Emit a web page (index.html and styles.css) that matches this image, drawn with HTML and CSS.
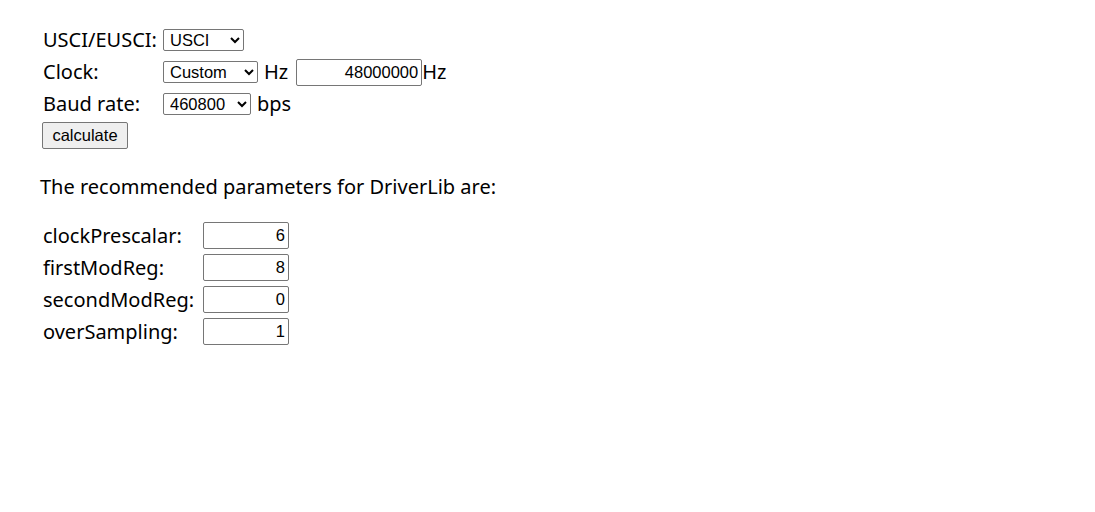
FILE: index.html
```html
<!DOCTYPE html>
<html>
<head>
<meta charset="utf-8">
<link rel="stylesheet" href="styles.css">
</head>
<body>
<div class="page">
  <div class="form">
    <div class="row">
      <span class="label">USCI/EUSCI:</span>
      <div class="field">
        <select class="sel sel-usci"><option>USCI</option><option>EUSCI</option></select>
      </div>
    </div>
    <div class="row">
      <span class="label">Clock:</span>
      <div class="field">
        <select class="sel sel-clock"><option>Custom</option></select>
        <span class="unit">Hz</span>
        <input class="num num-clock" type="text" value="48000000"><span class="unit tight">Hz</span>
      </div>
    </div>
    <div class="row">
      <span class="label">Baud rate:</span>
      <div class="field">
        <select class="sel sel-baud"><option>460800</option></select>
        <span class="unit">bps</span>
      </div>
    </div>
    <div class="btnrow">
      <button class="btn" type="button">calculate</button>
    </div>
  </div>
  <p class="intro">The recommended parameters for DriverLib are:</p>
  <div class="results">
    <span class="label">clockPrescalar:</span><input class="num num-res" type="text" value="6">
    <span class="label">firstModReg:</span><input class="num num-res" type="text" value="8">
    <span class="label">secondModReg:</span><input class="num num-res" type="text" value="0">
    <span class="label">overSampling:</span><input class="num num-res" type="text" value="1">
  </div>
</div>
</body>
</html>
```
FILE: styles.css
```css
html, body {
  margin: 0;
  padding: 0;
  background: #ffffff;
}
body {
  font-family: "Noto Sans", "Noto Sans CJK SC", sans-serif;
  font-size: 20px;
  color: #000;
}
.page {
  padding: 24px 0 0 40px;
}
.form {
  display: flex;
  flex-direction: column;
}
.row {
  display: grid;
  grid-template-columns: 120px auto;
  align-items: center;
  height: 32px;
  padding-left: 3px;
}
.label {
  white-space: nowrap;
  line-height: 26px;
}
.field {
  display: flex;
  align-items: center;
  gap: 6px;
}
.sel {
  font-family: Arial, "Liberation Sans", sans-serif;
  font-size: 16.5px;
  height: 22px;
  padding: 0 0 0 2px;
  border: 1px solid #767676;
  border-radius: 2px;
  background: #fff;
  color: #000;
}
.sel-usci { width: 81px; }
.sel-clock { width: 95px; }
.sel-baud { width: 88px; }
.unit { line-height: 26px; }
.unit.tight { margin-left: -6px; }
.num {
  font-family: Arial, "Liberation Sans", sans-serif;
  font-size: 16.5px;
  text-align: right;
  height: 27px;
  box-sizing: border-box;
  border: 1px solid #767676;
  border-radius: 2px;
  padding: 0 3px 0 2px;
  color: #000;
  background: #fff;
}
.num-clock { width: 126px; margin-left: 2px; }
.btnrow {
  padding: 0 0 0 2px;
}
.btn {
  font-family: Arial, "Liberation Sans", sans-serif;
  font-size: 16.5px;
  width: 86px;
  height: 27px;
  border: 1px solid #767676;
  border-radius: 2px;
  background: #efefef;
  color: #000;
  padding: 0;
}
.intro {
  margin: 24px 0 0 0;
}
.results {
  display: grid;
  grid-template-columns: 160px 86px;
  grid-auto-rows: 27px;
  row-gap: 5px;
  align-items: center;
  margin-top: 22px;
  padding-left: 3px;
}
.num-res { width: 86px; }
```
